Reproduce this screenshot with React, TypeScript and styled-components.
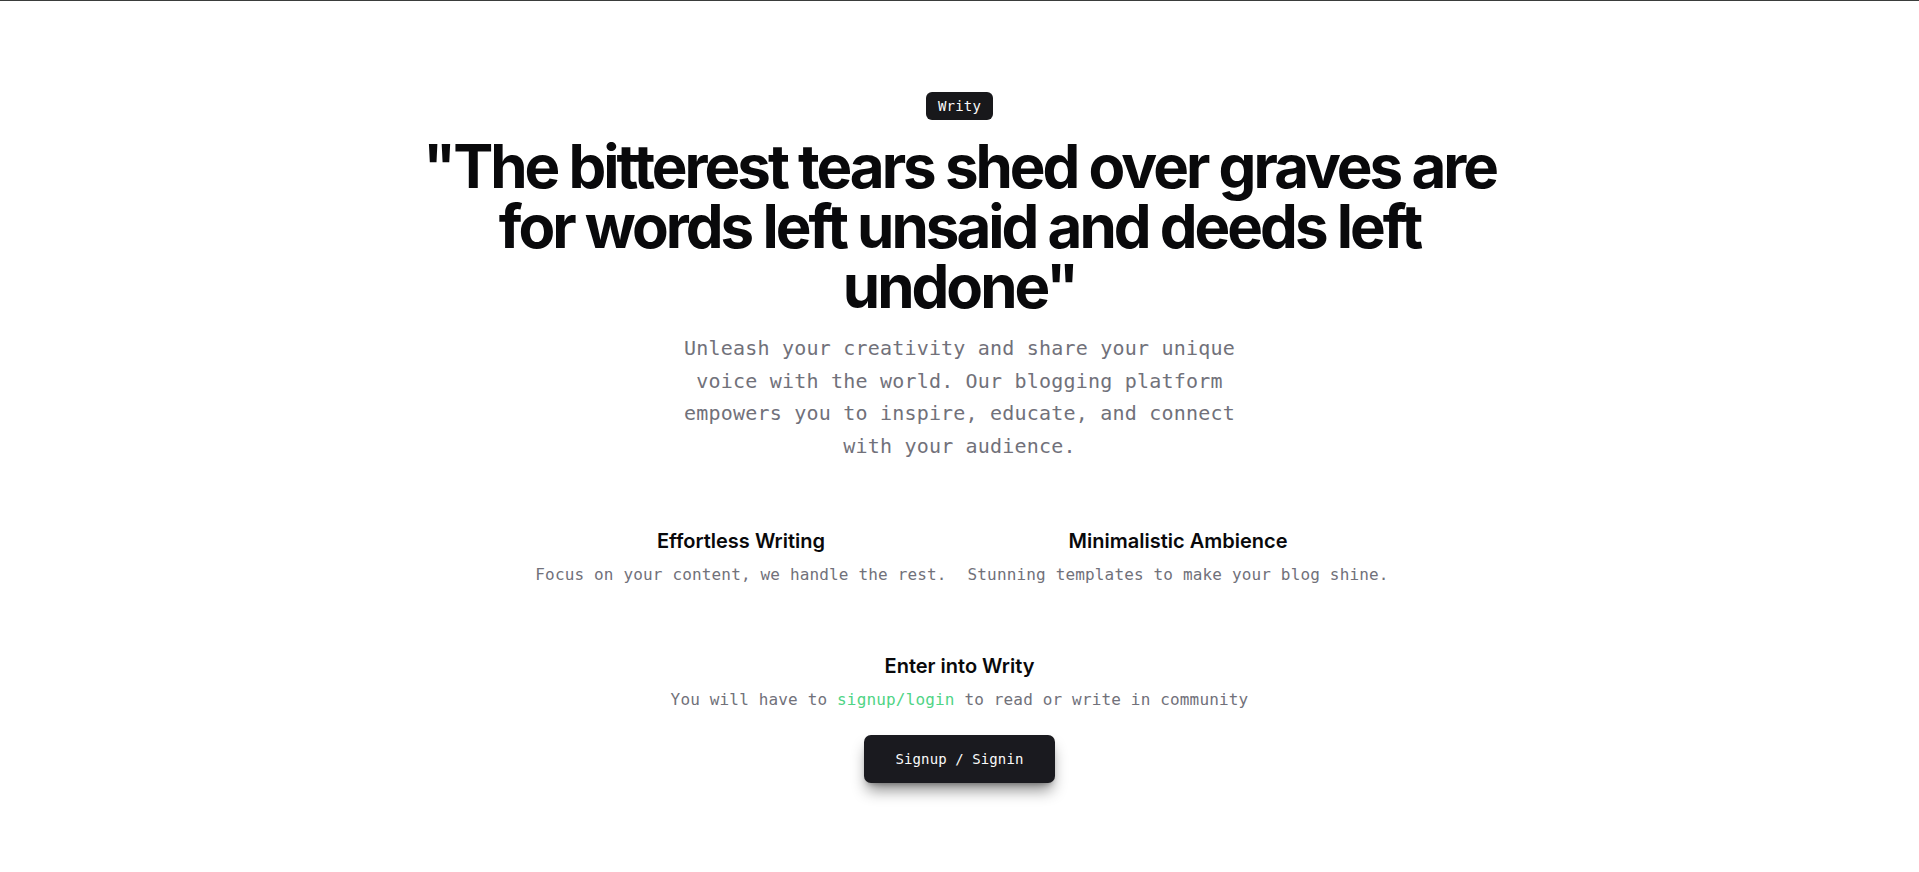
import React from "react";
import styled, { createGlobalStyle } from "styled-components";

const GlobalStyle = createGlobalStyle`
  * { box-sizing: border-box; }
  html, body { margin: 0; padding: 0; background: #ffffff; }
  body { font-family: "Inter", "Noto Sans", sans-serif; color: #09090b; }
`;

const Page = styled.main`
  min-height: 872px;
  border-top: 1px solid #3a3d3b;
  display: flex;
  flex-direction: column;
  align-items: center;
  padding-top: 91px;
`;

const Hero = styled.section`
  display: flex;
  flex-direction: column;
  align-items: center;
  gap: 16px;
  text-align: center;
`;

const Badge = styled.span`
  display: inline-flex;
  align-items: center;
  height: 28px;
  padding: 0 12px;
  border-radius: 6px;
  background: #18181b;
  color: #fafafa;
  font-family: "DejaVu Sans Mono", "Liberation Mono", monospace;
  font-size: 14px;
  letter-spacing: 0.2px;
`;

const Headline = styled.h1`
  margin: 0;
  max-width: 1120px;
  font-family: "Inter", "Noto Sans", sans-serif;
  font-weight: 700;
  font-size: 60px;
  line-height: 60px;
  letter-spacing: -0.05em;
  color: #09090b;
`;

const Lead = styled.p`
  margin: 0;
  max-width: 570px;
  font-family: "DejaVu Sans Mono", "Liberation Mono", monospace;
  font-size: 20px;
  line-height: 32.5px;
  letter-spacing: 0.2px;
  color: #71717a;
`;

const Features = styled.section`
  margin-top: 65px;
  display: grid;
  grid-template-columns: 1fr 1fr;
  column-gap: 16px;
  width: max-content;
`;

const Feature = styled.div`
  display: flex;
  flex-direction: column;
  align-items: center;
  gap: 8px;
  text-align: center;
`;

const Title = styled.h3`
  margin: 0;
  font-family: "Inter", "Noto Sans", sans-serif;
  font-weight: 600;
  font-size: 20px;
  line-height: 28px;
  letter-spacing: 0;
  color: #09090b;
`;

const Desc = styled.p`
  margin: 0;
  font-family: "DejaVu Sans Mono", "Liberation Mono", monospace;
  font-size: 16px;
  line-height: 24px;
  letter-spacing: 0.16px;
  color: #71717a;
`;

const Enter = styled.section`
  margin-top: 65px;
  display: flex;
  flex-direction: column;
  align-items: center;
  gap: 8px;
  text-align: center;
`;

const Link = styled.a`
  color: #4fd485;
  text-decoration: none;
`;

const Button = styled.button`
  margin-top: 15px;
  height: 48px;
  padding: 0 32px;
  border: none;
  border-radius: 7px;
  background: #1a1a1f;
  color: #fafafa;
  font-family: "DejaVu Sans Mono", "Liberation Mono", monospace;
  font-size: 14px;
  letter-spacing: 0.1px;
  box-shadow: 0 10px 15px -3px rgba(0, 0, 0, 0.45), 0 4px 6px -4px rgba(0, 0, 0, 0.4);
  cursor: pointer;
`;

export default function App() {
  return (
    <>
      <GlobalStyle />
      <Page>
        <Hero>
          <Badge>Writy</Badge>
          <Headline>
            "The bitterest tears shed over graves are for words left unsaid and deeds left undone"
          </Headline>
          <Lead>
            Unleash your creativity and share your unique voice with the world. Our blogging
            platform empowers you to inspire, educate, and connect with your audience.
          </Lead>
        </Hero>
        <Features>
          <Feature>
            <Title>Effortless Writing</Title>
            <Desc>Focus on your content, we handle the rest.</Desc>
          </Feature>
          <Feature>
            <Title>Minimalistic Ambience</Title>
            <Desc>Stunning templates to make your blog shine.</Desc>
          </Feature>
        </Features>
        <Enter>
          <Title>Enter into Writy</Title>
          <Desc>
            You will have to <Link href="#">signup/login</Link> to read or write in community
          </Desc>
          <Button>Signup / Signin</Button>
        </Enter>
      </Page>
    </>
  );
}
